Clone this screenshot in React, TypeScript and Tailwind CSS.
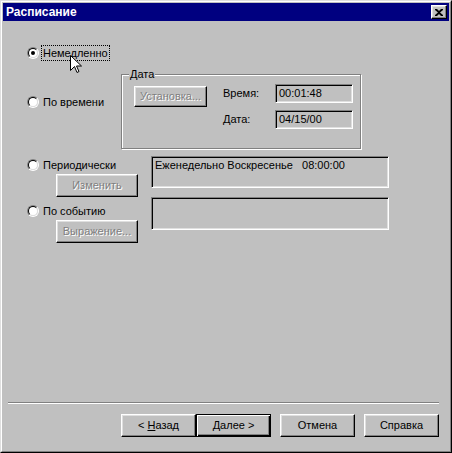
import React from 'react';

const Radio: React.FC<{ checked?: boolean }> = ({ checked }) => (
  <div className="w-3 h-3 shrink-0 rounded-full border border-t-[#808080] border-l-[#808080] border-b-white border-r-white flex">
    <div className="flex-1 rounded-full border border-t-black border-l-black border-b-[#dfdfdf] border-r-[#dfdfdf] bg-white flex items-center justify-center">
      {checked && <div className="w-1 h-1 rounded-full bg-black"></div>}
    </div>
  </div>
);

const RadioRow: React.FC<{ label: string; checked?: boolean; focused?: boolean; className?: string }> = ({
  label,
  checked,
  focused,
  className = '',
}) => (
  <div className={`flex items-center h-4 ${className}`}>
    <Radio checked={checked} />
    <span
      className={`ml-[2px] h-4 px-px leading-[14px] border border-dotted ${focused ? 'border-black' : 'border-transparent'}`}
    >
      {label}
    </span>
  </div>
);

const bevel =
  'border border-t-white border-l-white border-r-black border-b-black shadow-[inset_-1px_-1px_0_#808080,inset_1px_1px_0_#dfdfdf]';

const disabledText = 'text-[#808080] [text-shadow:1px_1px_0_#fff]';

const Field: React.FC<{ className?: string; children?: React.ReactNode }> = ({ className = '', children }) => (
  <div
    className={`border border-t-[#808080] border-l-[#808080] border-b-white border-r-white shadow-[inset_1px_1px_0_#000,inset_-1px_-1px_0_#dfdfdf] bg-[#c0c0c0] pl-[3px] pt-[2px] leading-[13px] whitespace-pre ${className}`}
  >
    {children}
  </div>
);

const Cursor: React.FC = () => (
  <svg className="absolute left-[69px] top-[54px]" width="12" height="19" viewBox="0 0 12 19">
    <path
      d="M0.5 0.5 L0.5 15.5 L4.5 11.5 L7 17.5 L9 16.5 L6.5 11 L11.5 11 Z"
      fill="#fff"
      stroke="#000"
      strokeWidth="1"
      strokeLinejoin="miter"
    />
  </svg>
);

export default function App() {
  return (
    <div className="relative w-[452px] h-[453px] bg-[#c0c0c0] border border-t-[#dfdfdf] border-l-[#dfdfdf] border-r-black border-b-black font-['Liberation_Sans',Arial,sans-serif] text-[11px] text-black select-none">
      <div className="h-full border border-t-white border-l-white border-r-[#808080] border-b-[#808080] p-px flex flex-col">
        {/* Title bar */}
        <div className="h-[18px] bg-[#000080] flex items-center justify-between pl-[3px] pr-[2px]">
          <span className="text-white font-bold text-[12px] leading-none">Расписание</span>
          <div className={`w-4 h-[14px] ${bevel} bg-[#c0c0c0] flex items-center justify-center`}>
            <svg width="8" height="7" viewBox="0 0 8 7">
              <path d="M0 0h2l2 2 2-2h2v1L5 3.5 8 6v1H6L4 5 2 7H0V6l3-2.5L0 1z" fill="#000" />
            </svg>
          </div>
        </div>

        {/* Client area */}
        <div className="flex-1 flex flex-col">
          {/* Immediate / by time */}
          <div className="flex mt-[24px] pl-[24px]">
            <div className="w-[94px]">
              <RadioRow label="Немедленно" checked focused />
              <RadioRow label="По времени" className="mt-[33px]" />
            </div>
            <div className="relative w-[240px] h-[75px] mt-[29px] border border-[#808080] shadow-[inset_1px_1px_0_#fff,1px_1px_0_#fff]">
              <span className="absolute left-[7px] -top-[7px] px-px bg-[#c0c0c0] leading-[13px]">Дата</span>
              <div className="flex items-start">
                <div className={`ml-[12px] mt-[11px] w-[73px] h-[21px] ${bevel} flex items-center justify-center ${disabledText}`}>
                  Установка...
                </div>
                <div className="ml-[16px]">
                  <div className="flex items-center mt-[9px]">
                    <span className="w-[52px]">Время:</span>
                    <Field className="w-[78px] h-[19px]">00:01:48</Field>
                  </div>
                  <div className="flex items-center mt-[7px]">
                    <span className="w-[52px]">Дата:</span>
                    <Field className="w-[78px] h-[19px]">04/15/00</Field>
                  </div>
                </div>
              </div>
            </div>
          </div>

          {/* Periodic / by event */}
          <div className="flex mt-[7px] pl-[24px]">
            <div className="w-[124px]">
              <RadioRow label="Периодически" className="mt-px" />
              <div className={`ml-[29px] mt-px w-[82px] h-[23px] ${bevel} flex items-center justify-center ${disabledText}`}>
                Изменить
              </div>
              <RadioRow label="По событию" className="mt-[6px]" />
              <div className={`ml-[29px] mt-px w-[82px] h-[23px] ${bevel} flex items-center justify-center ${disabledText}`}>
                Выражение...
              </div>
            </div>
            <div>
              <Field className="w-[238px] h-[32px]">Еженедельно Воскресенье   08:00:00</Field>
              <Field className="w-[238px] h-[33px] mt-[9px]"></Field>
            </div>
          </div>

          <div className="flex-1"></div>

          {/* Separator */}
          <div className="h-[2px] ml-[5px] mr-[10px] border-t border-t-[#808080] border-b border-b-white"></div>

          {/* Wizard buttons */}
          <div className="flex justify-end pr-[10px] mt-[10px] mb-[13px]">
            <div className={`w-[75px] h-[23px] ${bevel} flex items-center justify-center`}>
              &lt; <span className="underline ml-[3px]">Н</span>азад
            </div>
            <div className="w-[75px] h-[23px] border border-black shadow-[inset_1px_1px_0_#fff,inset_-1px_-1px_0_#000,inset_-2px_-2px_0_#808080] flex items-center justify-center">
              Далее &gt;
            </div>
            <div className={`ml-[9px] w-[75px] h-[23px] ${bevel} flex items-center justify-center`}>Отмена</div>
            <div className={`ml-[9px] w-[75px] h-[23px] ${bevel} flex items-center justify-center`}>Справка</div>
          </div>
        </div>
      </div>
      <Cursor />
    </div>
  );
}
